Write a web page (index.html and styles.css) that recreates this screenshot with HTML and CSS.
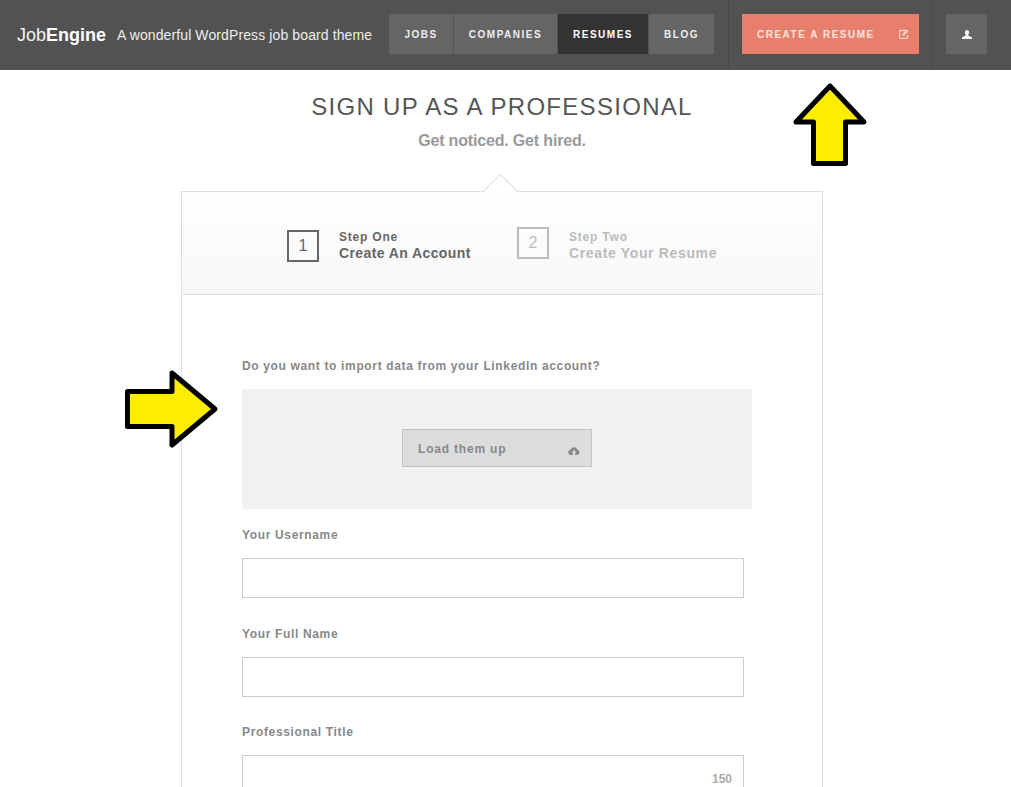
FILE: index.html
```html
<!DOCTYPE html>
<html>
<head>
    <title>JobEngine - Sign up as a professional</title>
    <link rel="stylesheet" href="styles.css">
</head>
<body>
    <header class="topbar">
        <a class="logo">Job<b>Engine</b></a>
        <span class="tagline">A wonderful WordPress job board theme</span>
        <nav class="menu">
            <a class="jobs">Jobs</a>
            <a class="companies">Companies</a>
            <a class="resumes active">Resumes</a>
            <a class="blog">Blog</a>
        </nav>
        <div class="create-wrap">
            <a class="create">
                <span>Create a resume</span>
                <svg width="10" height="10" viewBox="0 0 10 10">
                    <path d="M7 1.500H1.500a1 1 0 0 0-1 1v6a1 1 0 0 0 1 1h6a1 1 0 0 0 1-1V6" fill="none" stroke="#f7d5cd" stroke-width="1.300"/>
                    <path d="M3.500 5L8 .5 9.500 2 5 6.500H3.500z" fill="#f7d5cd"/>
                </svg>
            </a>
        </div>
        <a class="user">
            <svg width="10" height="9" viewBox="0 0 10 9">
                <path d="M5 0c1.500 0 2.200 1 2.200 2.400 0 1-.5 1.800-1 2.300v.8L10 7.300V9H0V7.300l3.800-1.800v-.8c-.5-.5-1-1.300-1-2.300C2.800 1 3.500 0 5 0z" fill="#f2f2f2"/>
            </svg>
        </a>
    </header>

    <main class="page">
        <h1>Sign up as a professional</h1>
        <p class="subtitle">Get noticed. Get hired.</p>

        <section class="card">
            <div class="steps">
                <div class="step current">
                    <span class="num">1</span>
                    <div class="step-text"><small>Step One</small><strong>Create An Account</strong></div>
                </div>
                <div class="step next">
                    <span class="num">2</span>
                    <div class="step-text"><small>Step Two</small><strong>Create Your Resume</strong></div>
                </div>
            </div>

            <form class="form">
                <label class="import-label">Do you want to import data from your LinkedIn account?</label>
                <div class="import-box">
                    <a class="load-btn">
                        <span>Load them up</span>
                        <svg width="12" height="8" viewBox="0 0 12 8">
                            <path d="M3 8a2.600 2.600 0 0 1-.4-5.200A3.500 3.500 0 0 1 9.300 2.500 2.800 2.800 0 0 1 9 8H7.200V5.500h1.300L6 3 3.500 5.500h1.300V8z" fill="#888"/>
                        </svg>
                    </a>
                </div>

                <label class="first">Your Username</label>
                <input type="text">

                <label class="second">Your Full Name</label>
                <input type="text">

                <label>Professional Title</label>
                <div class="counted">
                    <input type="text">
                    <span class="count">150</span>
                </div>
            </form>
        </section>
    </main>

    <svg class="arrow arrow-up" width="80" height="92" viewBox="0 0 80 92">
        <path d="M40 8L74 44H55.500V85.500H23.500V44H6z" fill="#ffed00" stroke="#000" stroke-width="5" stroke-linejoin="round"/>
    </svg>
    <svg class="arrow arrow-right" width="104" height="86" viewBox="0 0 104 86">
        <path d="M7.500 25.500H52V7L95 43 52 79V60.500H7.500z" fill="#ffed00" stroke="#000" stroke-width="5" stroke-linejoin="round"/>
    </svg>
</body>
</html>
```

FILE: styles.css
```css
html, body {
    height: 787px;
    overflow: hidden;
}

body {
    font-family: "Liberation Sans", Arial, sans-serif;
    background-color: #fff;
    margin: 0;
    position: relative;
}

.topbar {
    display: flex;
    align-items: center;
    box-sizing: border-box;
    height: 70px;
    background-color: #525252;
    padding: 0 0 2px 17px;
    color: #fff;
}

.logo {
    font-size: 18px;
    width: 100px;
    margin-top: 2px;
    color: #f0f0f0;
}

.logo b {
    color: #fff;
}

.tagline {
    font-size: 14px;
    width: 272px;
    margin-top: 1px;
    letter-spacing: .11px;
    color: #eee;
}

.menu {
    display: flex;
    gap: 1px;
}

.menu a {
    display: flex;
    align-items: center;
    justify-content: center;
    height: 40px;
    background-color: #656565;
    color: #eee;
    font-size: 10px;
    font-weight: bold;
    letter-spacing: 1.5px;
    text-transform: uppercase;
}

.menu .jobs { width: 64px; }
.menu .companies { width: 103px; }
.menu .resumes { width: 90px; }
.menu .blog { width: 65px; }

.menu a.active {
    background-color: #333;
    color: #fff;
}

.create-wrap {
    display: flex;
    align-items: center;
    box-sizing: border-box;
    height: 70px;
    margin: 0 0 -2px 14px;
    padding: 0 13px 2px;
    border-left: 1px solid #4a4a4a;
    border-right: 1px solid #4a4a4a;
}

.create {
    display: flex;
    align-items: center;
    justify-content: space-between;
    box-sizing: border-box;
    width: 177px;
    height: 40px;
    padding: 0 10px 0 15px;
    background-color: #e87f6c;
    color: #fbe3dd;
    font-size: 10px;
    font-weight: bold;
    letter-spacing: 1.5px;
    text-transform: uppercase;
}

.user {
    display: flex;
    align-items: center;
    justify-content: center;
    width: 41px;
    height: 40px;
    margin-left: 13px;
    background-color: #656565;
}

.page {
    width: 642px;
    margin-left: 181px;
}

h1 {
    margin: 0;
    padding-top: 23px;
    text-align: center;
    font-size: 24px;
    line-height: 27px;
    font-weight: normal;
    letter-spacing: 1.3px;
    text-transform: uppercase;
    color: #555;
}

.subtitle {
    margin: 11px 0 0;
    text-align: center;
    font-size: 16px;
    line-height: 20px;
    font-weight: bold;
    letter-spacing: -.17px;
    color: #999;
}

.card {
    position: relative;
    margin-top: 40px;
    height: 620px;
    border: 1px solid #ddd;
}

/* little notch over the card */
.card::before {
    content: "";
    position: absolute;
    top: -13px;
    left: 306px;
    width: 24px;
    height: 24px;
    background-color: #fff;
    border-top: 1px solid #ddd;
    border-left: 1px solid #ddd;
    transform: rotate(45deg);
}

.steps {
    position: relative;
    display: flex;
    box-sizing: border-box;
    height: 103px;
    padding-left: 105px;
    background: linear-gradient(#fff, #f7f7f7);
    border-bottom: 1px solid #ddd;
}

.step {
    display: flex;
    gap: 20px;
}

.step.current {
    width: 230px;
    padding-top: 38px;
    color: #666;
}

.step.next {
    padding-top: 35px;
    color: #bbb;
}

.num {
    box-sizing: border-box;
    width: 32px;
    height: 32px;
    border: 2px solid currentColor;
    text-align: center;
    font-size: 16px;
    line-height: 28px;
}

.step-text {
    margin-top: -1px;
    font-weight: bold;
    letter-spacing: .8px;
}

.step.next .step-text {
    margin-top: 2px;
}

.step-text small,
.step-text strong {
    display: block;
}

.step-text small {
    font-size: 12px;
    line-height: 16px;
}

.step-text strong {
    font-size: 14px;
    line-height: 17px;
    letter-spacing: .4px;
}

.step.next strong {
    letter-spacing: .65px;
}

.form {
    padding: 63px 0 0 60px;
}

label {
    display: block;
    height: 14px;
    margin: 27px 0 17px;
    font-size: 12px;
    line-height: 16px;
    font-weight: bold;
    letter-spacing: .65px;
    color: #888;
}

.import-label {
    margin: 0 0 17px;
}

.first {
    margin-top: 18px;
}

.second {
    margin-top: 28px;
}

.import-box {
    display: flex;
    align-items: center;
    justify-content: center;
    box-sizing: border-box;
    width: 510px;
    height: 120px;
    padding-bottom: 2px;
    background-color: #f1f1f1;
}

.load-btn {
    display: flex;
    align-items: center;
    justify-content: space-between;
    box-sizing: border-box;
    width: 190px;
    height: 38px;
    padding: 0 11px 0 15px;
    background-color: #dcdcdc;
    border: 1px solid #c4c4c4;
    color: #888;
    font-size: 12px;
    font-weight: bold;
    letter-spacing: .8px;
}

.load-btn span {
    margin-top: 2px;
}

.load-btn svg {
    margin-top: 5px;
}

input {
    display: block;
    box-sizing: border-box;
    width: 502px;
    height: 40px;
    padding: 0 10px;
    border: 1px solid #ccc;
    border-radius: 0;
    background-color: #fff;
}

.counted {
    position: relative;
    width: 502px;
}

.count {
    position: absolute;
    top: 17px;
    right: 12px;
    font-size: 12px;
    font-weight: bold;
    color: #aaa;
}

/* yellow annotation arrows drawn over the page */
.arrow {
    position: absolute;
}

.arrow-up {
    top: 78px;
    left: 790px;
}

.arrow-right {
    top: 366px;
    left: 120px;
}
```
